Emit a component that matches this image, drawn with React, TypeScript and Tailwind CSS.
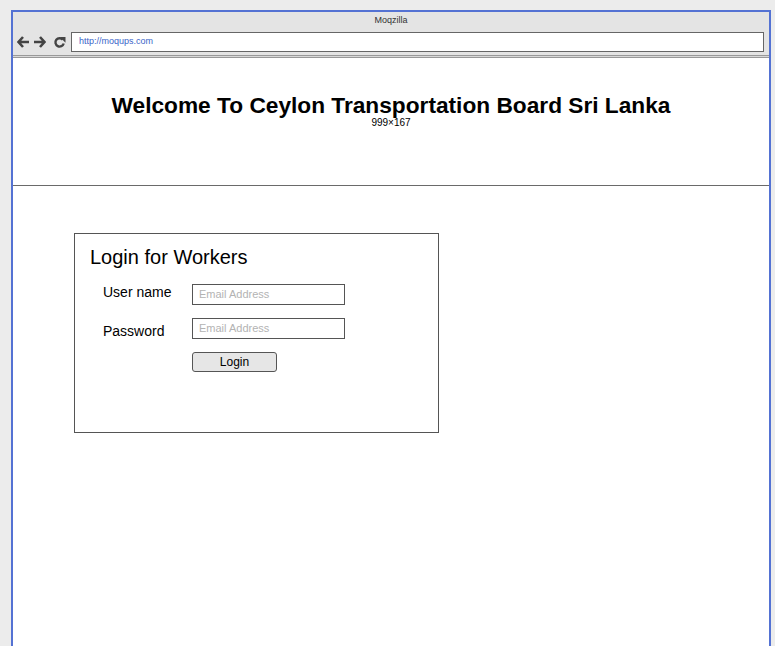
export default function App() {
  return (
    <div className="h-[646px] w-[775px] overflow-hidden bg-[#ececec] pl-[11px] pt-[10px] font-['Liberation_Sans',Arial,sans-serif]">
      <div className="h-[700px] w-[760px] border-2 border-[#5472d3] bg-white">
        <div className="flex h-[18px] items-center justify-center bg-[#e4e4e4] text-[9px] text-[#333]">
          Moqzilla
        </div>
        <div className="flex h-[25px] items-start bg-[#e4e4e4] pt-[2px]">
          <div className="flex h-[20px] w-[58px] items-center gap-[3px] pl-[4px] text-[#444]">
            <svg width="13" height="12" viewBox="0 0 13 12">
              <path d="M6 1 L1.5 6 L6 11 M1.5 6 H12" fill="none" stroke="#444" strokeWidth="2.6" />
            </svg>
            <svg width="13" height="12" viewBox="0 0 13 12">
              <path d="M7 1 L11.5 6 L7 11 M11.5 6 H1" fill="none" stroke="#444" strokeWidth="2.6" />
            </svg>
            <svg width="13" height="13" viewBox="0 0 13 13" className="ml-[4px]">
              <path d="M9.8 3.6 A4.2 4.2 0 1 0 10.7 7.5" fill="none" stroke="#444" strokeWidth="2.4" />
              <path d="M6.8 1 L12.5 1 L12.5 6.7 Z" fill="#444" />
            </svg>
          </div>
          <div className="mr-[5px] flex h-[20px] flex-1 items-center border border-[#666] bg-white pl-[7px] text-[9px] text-[#3a64c8]">
            http://moqups.com
          </div>
        </div>
        <div className="h-[3px] border-y border-[#999] bg-[#d8d8d8]" />
        <div className="flex h-[128px] flex-col items-center border-b border-[#6a6a6a] pt-[35px]">
          <h1 className="text-[22.7px] font-bold leading-[25px] text-black">
            Welcome To Ceylon Transportation Board Sri Lanka
          </h1>
          <span className="text-[10px] leading-[10px] text-black">999×167</span>
        </div>
        <div className="pl-[61px] pt-[47px]">
          <div className="h-[200px] w-[365px] border border-[#555] pl-[15px] pt-[11px]">
            <h2 className="text-[20px] leading-[24px] text-black">Login for Workers</h2>
            <div className="mt-[15px] flex items-start pl-[13px]">
              <span className="-mt-[2px] w-[89px] text-[14px] leading-[21px] text-black">User name</span>
              <div className="flex h-[21px] w-[153px] items-center border border-[#555] pl-[6px] text-[11px] text-[#b3b3b3]">
                Email Address
              </div>
            </div>
            <div className="mt-[13px] flex items-start pl-[13px]">
              <span className="-mb-[3px] mt-[3px] w-[89px] text-[14px] leading-[21px] text-black">Password</span>
              <div className="flex h-[21px] w-[153px] items-center border border-[#555] pl-[6px] text-[11px] text-[#b3b3b3]">
                Email Address
              </div>
            </div>
            <div className="mt-[13px] pl-[102px]">
              <button className="flex h-[20px] w-[85px] items-center justify-center rounded-[3px] border border-[#555] bg-[#e6e6e6] text-[12px] text-black">
                Login
              </button>
            </div>
          </div>
        </div>
      </div>
    </div>
  );
}
